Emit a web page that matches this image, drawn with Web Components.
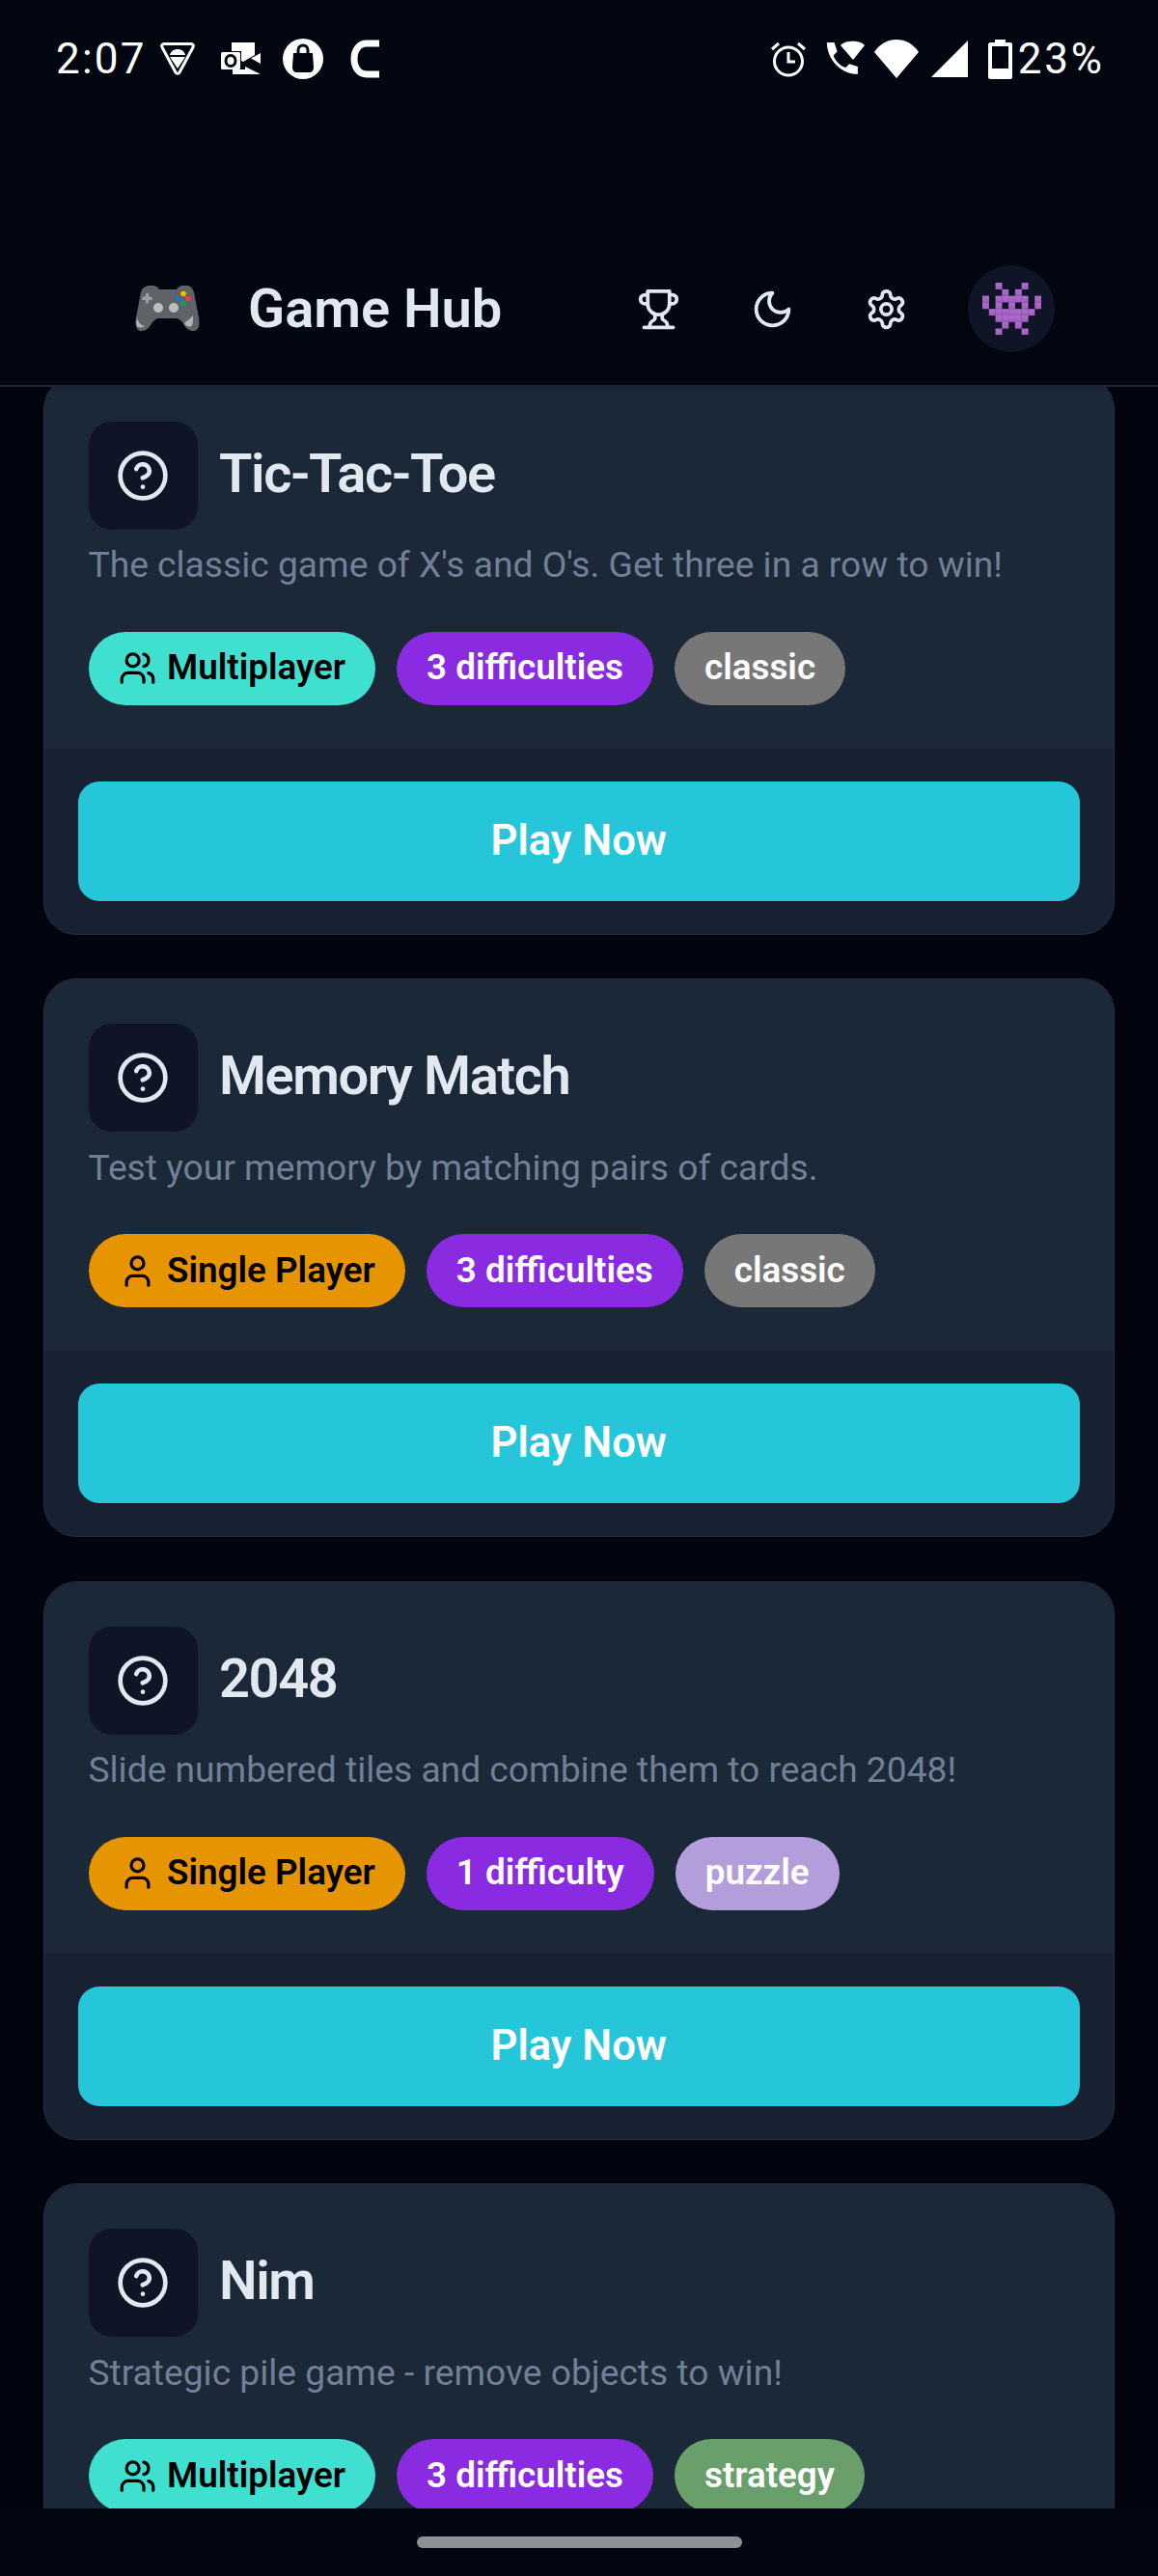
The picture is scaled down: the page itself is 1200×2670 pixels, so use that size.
<!DOCTYPE html>
<html lang="en">
<head>
<meta charset="utf-8">
<title>Game Hub</title>
<style>
    html, body {
        margin: 0;
        padding: 0;
        background: #01040e;
        font-family: Roboto, "Liberation Sans", sans-serif;
    }

    body {
        width: 1200px;
        height: 2670px;
        display: flex;
        flex-direction: column;
        overflow: hidden;
    }
</style>
</head>
<body>
    <app-header></app-header>

    <game-list>
        <game-card>
            <span slot="title">Tic-Tac-Toe</span>
            <span slot="description">The classic game of X's and O's. Get three in a row to win!</span>
            <game-tag slot="tags" kind="multi" icon="users">Multiplayer</game-tag>
            <game-tag slot="tags" kind="level">3 difficulties</game-tag>
            <game-tag slot="tags" kind="classic">classic</game-tag>
        </game-card>
        <game-card>
            <span slot="title">Memory Match</span>
            <span slot="description">Test your memory by matching pairs of cards.</span>
            <game-tag slot="tags" kind="single" icon="user">Single Player</game-tag>
            <game-tag slot="tags" kind="level">3 difficulties</game-tag>
            <game-tag slot="tags" kind="classic">classic</game-tag>
        </game-card>
        <game-card>
            <span slot="title">2048</span>
            <span slot="description">Slide numbered tiles and combine them to reach 2048!</span>
            <game-tag slot="tags" kind="single" icon="user">Single Player</game-tag>
            <game-tag slot="tags" kind="level">1 difficulty</game-tag>
            <game-tag slot="tags" kind="puzzle">puzzle</game-tag>
        </game-card>
        <!-- last card runs off the screen, its button is never in view -->
        <game-card offscreen-action>
            <span slot="title">Nim</span>
            <span slot="description">Strategic pile game - remove objects to win!</span>
            <game-tag slot="tags" kind="multi" icon="users">Multiplayer</game-tag>
            <game-tag slot="tags" kind="level">3 difficulties</game-tag>
            <game-tag slot="tags" kind="strategy">strategy</game-tag>
        </game-card>
    </game-list>

    <gesture-bar></gesture-bar>

<script>
/**
 * status bar along the top of the phone
 */
class StatusBar extends HTMLElement {
    constructor() {
        super();
        this.attachShadow({ mode: 'open' });

        this.shadowRoot.innerHTML = `
            <style>
                :host {
                    display: flex;
                    align-items: center;
                    height: 122px;
                    padding: 0 58px;
                    box-sizing: border-box;
                    color: #fff;
                    font-family: Roboto, sans-serif;
                    font-size: 44px;
                    font-weight: 400;
                }

                svg { display: block; flex: none; }

                .group { display: flex; align-items: center; }
                .right { margin-left: auto; }
                .time { width: 107px; letter-spacing: 2.2px; }
                .percent { letter-spacing: 2.8px; margin-left: 6px; margin-right: -2.8px; }
            </style>

            <div class="group">
                <span class="time">2:07</span>
                <svg width="38" height="36" viewBox="0 0 38 36" fill="none">
                    <path d="M5 2.5h28c2 0 3 1.800 2 3.500L21 32c-1 1.800-3 1.800-4 0L3 6c-1-1.700 0-3.500 2-3.500Z" stroke="#fff" stroke-width="3"/>
                    <path d="M11 14c1-4 4-6 8-6s7 2 8 6Z" fill="#fff"/>
                    <path d="M11 16h16l-8 12Z" fill="#fff"/>
                </svg>
                <svg style="margin-left:25px" width="42" height="34" viewBox="0 0 42 34">
                    <path d="M12 0h24v13l-12 7-2-1V9H12Z" fill="#fff"/>
                    <path d="M13 33v-5h13v-3l16 8Z" fill="#fff"/>
                    <path d="M42 11v11l-10-5.500Z" fill="#fff"/>
                    <rect x="1" y="10" width="20" height="18" rx="1.500" fill="#fff"/>
                    <ellipse cx="11" cy="19" rx="5" ry="5.500" fill="none" stroke="#01040e" stroke-width="3"/>
                </svg>
                <svg style="margin-left:23px" width="42" height="42" viewBox="0 0 42 42">
                    <circle cx="21" cy="21" r="21" fill="#fff"/>
                    <path d="M11 15h20l1 15c0 3-2 5-4 5H14c-2 0-4-2-4-5Z" fill="#01040e"/>
                    <path d="M16 15v-3c0-3 2-5 5-5s5 2 5 5v3" fill="none" stroke="#01040e" stroke-width="3"/>
                </svg>
                <svg style="margin-left:28px" width="30" height="40" viewBox="0 0 30 40" fill="none">
                    <path d="M30 4H17C9 4 4 11 4 20s5 16 13 16h13" stroke="#fff" stroke-width="7"/>
                </svg>
            </div>

            <div class="group right">
                <svg width="38" height="38" viewBox="0 0 38 38" fill="none" stroke="#fff" stroke-width="3">
                    <circle cx="19" cy="21.5" r="14.5"/>
                    <path d="M19 12v10h7M2 9l7-6M36 9l-7-6"/>
                </svg>
                <svg style="margin-left:18px" width="42" height="40" viewBox="0 0 42 40">
                    <path d="M4 4h8l3 10-4 4c2 6 7 11 13 13l4-4 9 3v8c-18 0-33-16-33-34Z" fill="#fff" transform="translate(-1 -1) scale(.97)"/>
                    <path d="M17 6C21 1 37 0 42 6L30 21Z" fill="#fff"/>
                </svg>
                <svg style="margin-left:10px" width="46" height="40" viewBox="0 0 46 40">
                    <path d="M0 13C6 4 14 0 23 0s17 4 23 13L23 40Z" fill="#fff"/>
                </svg>
                <svg style="margin-left:13px" width="38" height="38" viewBox="0 0 38 38">
                    <path d="M38 0v38H0Z" fill="#fff"/>
                </svg>
                <svg style="margin-left:21px" width="25" height="41" viewBox="0 0 25 41">
                    <path d="M7 0h11v3h5c1 0 2 1 2 2v34c0 1-1 2-2 2H2c-1 0-2-1-2-2V5c0-1 1-2 2-2h5Z" fill="#fff"/>
                    <rect x="4" y="7" width="17" height="23" fill="#01040e"/>
                </svg>
                <span class="percent">23%</span>
            </div>
        `;
    }
}

/**
 * the round header button
 */
class IconButton extends HTMLElement {
    constructor() {
        super();
        this.attachShadow({ mode: 'open' });

        this.shadowRoot.innerHTML = `
            <style>
                :host {
                    display: flex;
                    justify-content: center;
                    align-items: center;
                    width: 118px;
                    height: 90px;
                    color: #e2e8f0;
                }

                ::slotted(svg) {
                    width: 45px;
                    height: 45px;
                    fill: none;
                    stroke: currentColor;
                    stroke-width: 2;
                    stroke-linecap: round;
                    stroke-linejoin: round;
                }
            </style>
            <slot></slot>
        `;
    }
}

/**
 * app header, has the status bar inside since both share the dark strip
 */
class AppHeader extends HTMLElement {
    constructor() {
        super();
        this.attachShadow({ mode: 'open' });

        const pixels = [
            [2, 0], [6, 0],
            [3, 1], [5, 1],
            [0, 2], [2, 2], [3, 2], [4, 2], [5, 2], [6, 2], [8, 2],
            [0, 3], [2, 3], [4, 3], [6, 3], [8, 3],
            [1, 4], [2, 4], [3, 4], [4, 4], [5, 4], [6, 4], [7, 4],
            [2, 5], [3, 5], [4, 5], [5, 5], [6, 5],
            [3, 6], [5, 6],
            [2, 7], [6, 7]
        ];
        const invader = pixels
            .map(([x, y]) => `<rect x="${x}" y="${y}" width="1.02" height="1.02"/>`)
            .join('');

        this.shadowRoot.innerHTML = `
            <style>
                :host {
                    display: block;
                    flex: none;
                    position: relative;
                    z-index: 1;
                    background: #020611;
                    border-bottom: 2px solid #1b2535;
                }

                .bar {
                    display: flex;
                    align-items: center;
                    height: 90px;
                    margin-top: 153px;
                    margin-bottom: 34px;
                    padding: 0 107px 0 138px;
                }

                .logo { display: block; width: 69px; height: 48px; flex: none; }

                h1 {
                    margin: 0 0 0 50px;
                    font: 600 56px/1 Roboto, sans-serif;
                    color: #e2e8f0;
                }

                .actions { display: flex; align-items: center; margin-left: auto; }

                .avatar {
                    display: flex;
                    justify-content: center;
                    align-items: center;
                    width: 90px;
                    height: 90px;
                    margin-left: 26px;
                    border-radius: 50%;
                    background: #0f1526;
                }
            </style>

            <status-bar></status-bar>

            <div class="bar">
                <svg class="logo" viewBox="14 25 69 48">
                    <path d="M27 26c3-1.500 8-1.500 11 0 1.500 1 2 2 3 3h18c1-1 1.500-2 3-3 3-1.500 8-1.500 11 0 2 1 3 3 4 6l5 26c1 6 1 14-6 14-6 0-9-6-11-9-2-2-4-4-7-4H41c-3 0-5 2-7 4-2 3-5 9-11 9-7 0-7-8-6-14l5-26c1-3 2-5 5-6Z" fill="#5f6368"/>
                    <path d="M18 58c-1 5-1 9 1 10 3 1 6 0 7-1-4-1-7-4-8-9Z" fill="#b0b3b6"/>
                    <path d="M80 57c1 5 0 10-1 11-3 1-6 0-7-2-1-3 4-3 8-9Z" fill="#b0b3b6" transform="translate(-6 -1) scale(1.02 1)"/>
                    <path d="M28 33h3v3.500h3.500v3.500H31v3.500h-3V40h-3.500v-3.500H28Z" fill="#9aa0a6" transform="translate(-1 0)"/>
                    <circle cx="40" cy="48" r="5" fill="#bdbdbd"/>
                    <circle cx="56" cy="48" r="5" fill="#bdbdbd"/>
                    <circle cx="66" cy="33.500" r="2.800" fill="#fbbc04"/>
                    <circle cx="61" cy="38.500" r="2.800" fill="#1a73e8"/>
                    <circle cx="71" cy="38.500" r="2.800" fill="#ea4335"/>
                    <circle cx="66" cy="43.500" r="2.800" fill="#0f9d58"/>
                </svg>

                <h1>Game Hub</h1>

                <div class="actions">
                    <icon-button>
                        <svg viewBox="0 0 24 24">
                            <path d="M6 9H4.500a2.500 2.500 0 0 1 0-5H6"/>
                            <path d="M18 9h1.500a2.500 2.500 0 0 0 0-5H18"/>
                            <path d="M4 22h16"/>
                            <path d="M10 14.660V17c0 .55-.47.98-.97 1.210C7.850 18.750 7 20.240 7 22"/>
                            <path d="M14 14.660V17c0 .55.47.98.97 1.210C16.150 18.750 17 20.240 17 22"/>
                            <path d="M18 2H6v7a6 6 0 0 0 12 0V2Z"/>
                        </svg>
                    </icon-button>
                    <icon-button>
                        <svg viewBox="0 0 24 24"><path d="M12 3a6 6 0 0 0 9 9 9 9 0 1 1-9-9Z"/></svg>
                    </icon-button>
                    <icon-button>
                        <svg viewBox="0 0 24 24">
                            <path d="M12.220 2h-.44a2 2 0 0 0-2 2v.18a2 2 0 0 1-1 1.730l-.43.25a2 2 0 0 1-2 0l-.15-.08a2 2 0 0 0-2.730.73l-.22.38a2 2 0 0 0 .73 2.730l.15.1a2 2 0 0 1 1 1.720v.51a2 2 0 0 1-1 1.740l-.15.09a2 2 0 0 0-.73 2.730l.22.38a2 2 0 0 0 2.730.73l.15-.08a2 2 0 0 1 2 0l.43.25a2 2 0 0 1 1 1.730V20a2 2 0 0 0 2 2h.44a2 2 0 0 0 2-2v-.18a2 2 0 0 1 1-1.730l.43-.25a2 2 0 0 1 2 0l.15.08a2 2 0 0 0 2.730-.73l.22-.39a2 2 0 0 0-.73-2.730l-.15-.08a2 2 0 0 1-1-1.740v-.5a2 2 0 0 1 1-1.740l.15-.09a2 2 0 0 0 .73-2.730l-.22-.38a2 2 0 0 0-2.730-.73l-.15.08a2 2 0 0 1-2 0l-.43-.25a2 2 0 0 1-1-1.730V4a2 2 0 0 0-2-2z"/>
                            <circle cx="12" cy="12" r="3"/>
                        </svg>
                    </icon-button>
                    <div class="avatar">
                        <svg width="61" height="54.4" viewBox="0 0 9 8" fill="url(#invader-fill)">
                            <defs>
                                <linearGradient id="invader-fill" x1="0" y1="0" x2="0" y2="1">
                                    <stop offset="0" stop-color="#ad6fcb"/>
                                    <stop offset=".7" stop-color="#a561c4"/>
                                    <stop offset="1" stop-color="#9a58b4"/>
                                </linearGradient>
                            </defs>
                            ${invader}
                        </svg>
                    </div>
                </div>
            </div>
        `;
    }
}

/**
 * scrolled list of cards, clipped by the header and the gesture bar
 */
class GameList extends HTMLElement {
    constructor() {
        super();
        this.attachShadow({ mode: 'open' });

        this.shadowRoot.innerHTML = `
            <style>
                :host {
                    display: block;
                    flex: 1;
                    min-height: 0;
                    overflow: hidden;
                }

                .list {
                    display: flex;
                    flex-direction: column;
                    gap: 45.5px;
                    /* the list is scrolled a little under the header */
                    margin-top: -11.5px;
                    padding: 0 45px;
                }
            </style>
            <div class="list"><slot></slot></div>
        `;
    }
}

const TAG_ICONS = {
    users: `<path d="M16 21v-2a4 4 0 0 0-4-4H6a4 4 0 0 0-4 4v2"/><circle cx="9" cy="7" r="4"/><path d="M22 21v-2a4 4 0 0 0-3-3.87"/><path d="M16 3.13a4 4 0 0 1 0 7.75"/>`,
    user: `<path d="M19 21v-2a4 4 0 0 0-4-4H9a4 4 0 0 0-4 4v2"/><circle cx="12" cy="7" r="4"/>`
};

/**
 * coloured pill under a game description
 */
class GameTag extends HTMLElement {
    constructor() {
        super();
        this.attachShadow({ mode: 'open' });

        const icon = TAG_ICONS[this.getAttribute('icon')];

        this.shadowRoot.innerHTML = `
            <style>
                :host {
                    display: inline-flex;
                    align-items: center;
                    gap: 11.5px;
                    height: 76px;
                    padding: 0 31px;
                    border-radius: 38px;
                    font: 600 36.8px/1 Roboto, sans-serif;
                    color: #fff;
                    background: #777;
                }

                :host([kind="multi"]) { background: #40e0d0; color: #000; }
                :host([kind="single"]) { background: #e69500; color: #000; }
                :host([kind="level"]) { background: #8a2be2; }
                :host([kind="puzzle"]) { background: #b39ddb; }
                :host([kind="strategy"]) { background: #689f6b; }

                svg {
                    display: block;
                    width: 39px;
                    height: 39px;
                    fill: none;
                    stroke: currentColor;
                    stroke-width: 2;
                    stroke-linecap: round;
                    stroke-linejoin: round;
                }
            </style>
            ${icon ? `<svg viewBox="0 0 24 24">${icon}</svg>` : ''}
            <slot></slot>
        `;
    }
}

/**
 * one game in the list
 */
class GameCard extends HTMLElement {
    constructor() {
        super();
        this.attachShadow({ mode: 'open' });

        this.shadowRoot.innerHTML = `
            <style>
                :host {
                    display: block;
                    flex: none;
                    box-sizing: border-box;
                    height: 579px;
                    border: 1.5px solid #222d3e;
                    border-radius: 34px;
                    overflow: hidden;
                    background: #172131;
                }

                :host([offscreen-action]) .bottom { display: none; }

                .top {
                    box-sizing: border-box;
                    height: 385px;
                    padding: 46px 45px 0 45.5px;
                    background: #1b2838;
                }

                .heading {
                    display: flex;
                    align-items: center;
                    gap: 22.5px;
                }

                .icon {
                    display: flex;
                    justify-content: center;
                    align-items: center;
                    flex: none;
                    width: 113px;
                    height: 112px;
                    border-radius: 24px;
                    background: #0f1526;
                    color: #e2e8f0;
                }

                .icon svg {
                    width: 56px;
                    height: 56px;
                    fill: none;
                    stroke: currentColor;
                    stroke-width: 2;
                    stroke-linecap: round;
                    stroke-linejoin: round;
                }

                .title {
                    font: 600 56px/1.2 Roboto, sans-serif;
                    letter-spacing: -1.4px;
                    color: #e2e8f0;
                    margin-top: -2px;
                }

                .description {
                    margin-top: 8.5px;
                    font: 400 37.2px/56px Roboto, sans-serif;
                    color: #718096;
                }

                .tags {
                    display: flex;
                    gap: 22px;
                    margin-top: 41.5px;
                }

                .bottom {
                    padding: 34px 35px 0 34.5px;
                }

                button {
                    display: block;
                    width: 100%;
                    height: 124px;
                    border: 0;
                    border-radius: 22px;
                    background: #26c6da;
                    color: #fff;
                    font: 600 43.6px/1 Roboto, sans-serif;
                    cursor: pointer;
                }
            </style>

            <div class="top">
                <div class="heading">
                    <div class="icon">
                        <svg viewBox="0 0 24 24">
                            <circle cx="12" cy="12" r="10"/>
                            <path d="M9.09 9a3 3 0 0 1 5.83 1c0 2-3 3-3 3"/>
                            <path d="M12 17h.01"/>
                        </svg>
                    </div>
                    <div class="title"><slot name="title"></slot></div>
                </div>
                <div class="description"><slot name="description"></slot></div>
                <div class="tags"><slot name="tags"></slot></div>
            </div>
            <div class="bottom">
                <button>Play Now</button>
            </div>
        `;
    }
}

/**
 * android gesture pill at the bottom
 */
class GestureBar extends HTMLElement {
    constructor() {
        super();
        this.attachShadow({ mode: 'open' });

        this.shadowRoot.innerHTML = `
            <style>
                :host {
                    display: flex;
                    flex: none;
                    justify-content: center;
                    align-items: center;
                    height: 70px;
                    background: #020611;
                }

                div {
                    width: 337px;
                    height: 12px;
                    border-radius: 6px;
                    background: #8e9095;
                }
            </style>
            <div></div>
        `;
    }
}

customElements.define('status-bar', StatusBar);
customElements.define('icon-button', IconButton);
customElements.define('app-header', AppHeader);
customElements.define('game-list', GameList);
customElements.define('game-tag', GameTag);
customElements.define('game-card', GameCard);
customElements.define('gesture-bar', GestureBar);
</script>
</body>
</html>
